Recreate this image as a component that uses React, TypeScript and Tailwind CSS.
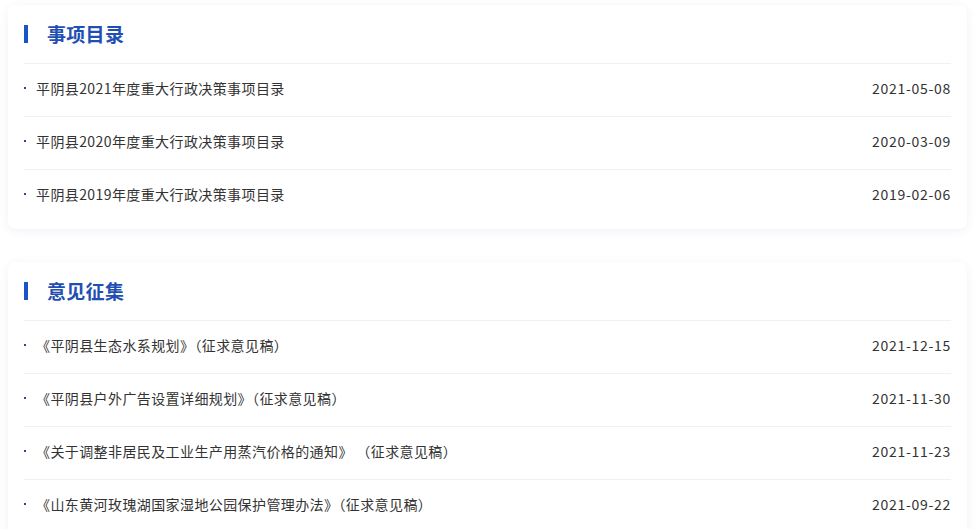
import React from 'react';

type Item = { title: string; date: string };

const catalog: Item[] = [
  { title: '平阴县2021年度重大行政决策事项目录', date: '2021-05-08' },
  { title: '平阴县2020年度重大行政决策事项目录', date: '2020-03-09' },
  { title: '平阴县2019年度重大行政决策事项目录', date: '2019-02-06' },
];

const opinions: Item[] = [
  { title: '《平阴县生态水系规划》（征求意见稿）', date: '2021-12-15' },
  { title: '《平阴县户外广告设置详细规划》（征求意见稿）', date: '2021-11-30' },
  { title: '《关于调整非居民及工业生产用蒸汽价格的通知》 （征求意见稿）', date: '2021-11-23' },
  { title: '《山东黄河玫瑰湖国家湿地公园保护管理办法》（征求意见稿）', date: '2021-09-22' },
];

const Panel: React.FC<{ title: string; items: Item[] }> = ({ title, items }) => {
  return (
    <section className="bg-white rounded-lg shadow-[0_2px_10px_rgba(60,80,160,0.08)] px-4 pt-[14px] pb-[7px]">
      <div className="flex items-center h-[28px] mb-[16px]">
        <span className="w-[4px] h-[18px] bg-[#1a55c6] translate-y-[1px]" />
        <h2 className="ml-[19px] text-[19px] font-bold text-[#1f4fb3] leading-none tracking-[0.3px]">{title}</h2>
      </div>
      <ul>
        {items.map((item) => (
          <li
            key={item.title}
            className="flex items-center justify-between h-[53px] pb-[4px] border-t border-[#f0f1f4] text-[14px] text-[#333] leading-5"
          >
            <div className="flex items-center">
              <span className="w-[2px] h-[2px] bg-[#2a4a8a]" />
              <span className="ml-[10px] tracking-[0.4px]">{item.title}</span>
            </div>
            <span className="tracking-[0.7px]">{item.date}</span>
          </li>
        ))}
      </ul>
    </section>
  );
};

const App: React.FC = () => {
  return (
    <div
      className="min-h-[529px] bg-white px-2 pt-[5px] flex flex-col gap-[33px]"
      style={{ fontFamily: '"Noto Sans CJK SC", "Noto Sans", sans-serif' }}
    >
      <Panel title="事项目录" items={catalog} />
      <Panel title="意见征集" items={opinions} />
    </div>
  );
};

export default App;
